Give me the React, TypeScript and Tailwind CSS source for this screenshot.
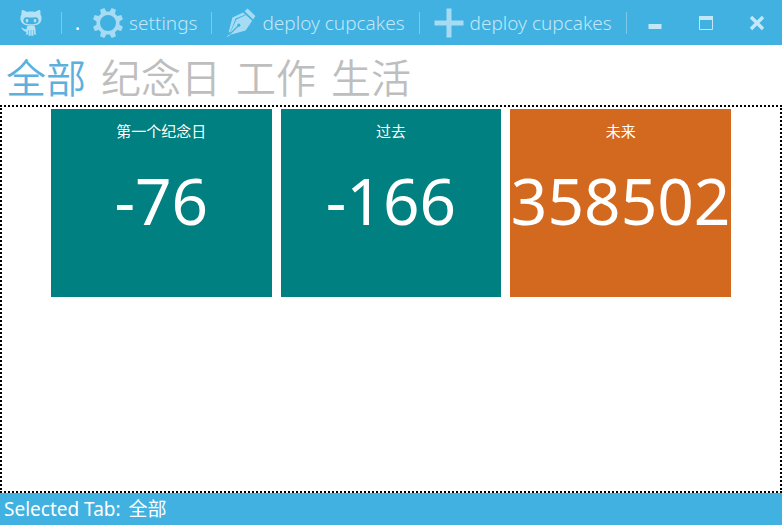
import { useState } from 'react';

const TABS = ['全部', '纪念日', '工作', '生活'];

const TILES = [
  { title: '第一个纪念日', value: '-76', color: 'bg-[#008080]' },
  { title: '过去', value: '-166', color: 'bg-[#008080]' },
  { title: '未来', value: '358502', color: 'bg-[#d2691e]' },
];

const TEETH = [0, 45, 90, 135, 180, 225, 270, 315];

function OctocatIcon() {
  return (
    <svg viewBox="0 0 22 27" className="h-[27px] w-[22px]" fill="currentColor" aria-hidden="true">
      <path
        fillRule="evenodd"
        d="M2 1C3.6 .7 5.6 2 6.8 3C9.4 2.4 12.6 2.4 15.2 3C16.4 2 18.4 .7 20 1C20.7 2.7 20.6 4.2 20.3 5.3C21.4 6.7 21.7 8.2 21.5 10C21.2 14.6 18 16.5 11 16.5C4 16.5 .8 14.6 .5 10C.3 8.2 .6 6.7 1.7 5.3C1.4 4.2 1.3 2.7 2 1ZM6.5 8.3C4.6 8.3 3.4 9.7 3.4 11.5C3.4 14.3 6 15.2 11 15.2C16 15.2 18.6 14.3 18.6 11.5C18.6 9.7 17.4 8.3 15.5 8.3C14 8.3 12.8 8.6 11 8.6C9.2 8.6 8 8.3 6.5 8.3Z"
      />
      <ellipse cx="7" cy="11.6" rx="1.3" ry="1.9" />
      <ellipse cx="15" cy="11.6" rx="1.3" ry="1.9" />
      <path d="M7.4 17C9.5 16 12.5 16 14.6 17C15.6 19 15.6 21 15.6 24L16.4 25.4H14V21H13.4V26.8H11.3V21H10.7V26.8H8.6V21H8V25.4H5.6L6.4 24V22.7C3.6 23 3.2 20.4 .8 18.8C3 18 4 20.6 6.5 20.5C6.6 19 6.8 18 7.4 17Z" />
    </svg>
  );
}

function GearIcon() {
  return (
    <svg viewBox="-15 -15 30 30" className="size-[30px] text-[#a6dcf3]" fill="currentColor" aria-hidden="true">
      <path
        fillRule="evenodd"
        d="M0-11.5A11.5 11.5 0 1 1 0 11.5A11.5 11.5 0 1 1 0-11.5ZM0-8A8 8 0 1 0 0 8A8 8 0 1 0 0-8Z"
      />
      {TEETH.map((angle) => (
        <path key={angle} d="M-3-10.5L-2.3-15.2H2.3L3-10.5Z" transform={`rotate(${angle + 22.5})`} />
      ))}
    </svg>
  );
}

function PenIcon() {
  return (
    <svg viewBox="0 0 30 30" className="size-[30px] text-[#a6dcf3]" aria-hidden="true">
      <path d="M18.6 3.2L21.6 .6L29.4 8L27.2 11.4Z" fill="currentColor" />
      <path d="M17.2 4.6L19.4 6.4L9.6 10.6L4.6 23.4L2.6 24.6L6.4 9.4Z" fill="currentColor" />
      <path d="M20 7L26.2 12.8L19.6 22.4L5.4 26.6L.3 29.4L4.4 24.6L10.4 11.4Z" fill="currentColor" />
      <path d="M3 27L12 18" stroke="#41b1e1" strokeWidth="1.1" />
      <circle cx="12.8" cy="17.2" r="1.6" fill="#41b1e1" />
    </svg>
  );
}

function PlusIcon() {
  return (
    <svg viewBox="0 0 30 30" className="size-[30px] text-[#a6dcf3]" aria-hidden="true">
      <path d="M15 .5V29.5M.5 15H29.5" stroke="currentColor" strokeWidth="5" />
    </svg>
  );
}

function Divider() {
  return <span className="h-[22px] w-px shrink-0 bg-[#7cc9eb]" />;
}

const command = 'flex items-center gap-[6px] whitespace-nowrap';

export default function App() {
  const [selected, setSelected] = useState(TABS[0]);

  return (
    <div className="flex min-h-screen flex-col bg-white font-['Noto_Sans','Noto_Sans_CJK_SC',sans-serif]">
      <header className="flex h-[45px] items-center bg-[#41b1e1] text-[19px] leading-6 font-light text-[#c2e7f7]">
        <button type="button" aria-label="GitHub" className="ml-5 mr-[19px] text-[#b3e1f5]">
          <OctocatIcon />
        </button>
        <Divider />
        <h1 className="mx-[13px] font-normal text-white">.</h1>
        <button type="button" className={`${command} mr-[14px]`}>
          <GearIcon />
          settings
        </button>
        <Divider />
        <button type="button" className={`${command} mx-[14px]`}>
          <PenIcon />
          deploy cupcakes
        </button>
        <Divider />
        <button type="button" className={`${command} mx-[14px]`}>
          <PlusIcon />
          deploy cupcakes
        </button>
        <Divider />
        <div className="ml-auto flex">
          <button type="button" aria-label="Minimize" className="flex h-[45px] w-[51px] items-center justify-center">
            <svg viewBox="0 0 16 16" className="size-4" aria-hidden="true">
              <path d="M1.5 11.5H14.5" stroke="currentColor" strokeWidth="5" />
            </svg>
          </button>
          <button type="button" aria-label="Maximize" className="flex h-[45px] w-[51px] items-center justify-center">
            <svg viewBox="0 0 16 16" className="size-4" aria-hidden="true">
              <path d="M1.5 1.5H14.5V14.5H1.5Z" fill="none" stroke="currentColor" />
              <path d="M1 1H15V5H1Z" fill="currentColor" />
            </svg>
          </button>
          <button type="button" aria-label="Close" className="flex h-[45px] w-[51px] items-center justify-center">
            <svg viewBox="0 0 16 16" className="size-4" aria-hidden="true">
              <path d="M2 2L14 14M14 2L2 14" stroke="currentColor" strokeWidth="3.4" />
            </svg>
          </button>
        </div>
      </header>

      <nav role="tablist" className="flex h-[60px] items-center gap-[15px] px-[6px] pt-[6px]">
        {TABS.map((tab) => (
          <button
            key={tab}
            type="button"
            role="tab"
            aria-selected={tab === selected}
            onClick={() => setSelected(tab)}
            className={`text-[40px] leading-[54px] font-[350] ${tab === selected ? 'text-[#5bb0de]' : 'text-[#bebebe]'}`}
          >
            {tab}
          </button>
        ))}
      </nav>

      <main className="flex-1 border-2 border-dotted border-black pt-[2px]">
        <div className="mx-auto grid max-w-[680px] grid-cols-3 gap-[9px]">
          {TILES.map((tile) => (
            <section key={tile.title} className={`flex h-[188px] flex-col items-center pt-3 text-white ${tile.color}`}>
              <h2 className="text-[15px] leading-5">{tile.title}</h2>
              <p className="mt-[18px] text-[64px] leading-[84px]">{tile.value}</p>
            </section>
          ))}
        </div>
      </main>

      <footer className="flex h-8 items-center gap-2 bg-[#41b1e1] px-1 text-[19px] leading-6 text-white">
        <span>Selected Tab:</span>
        <span>{selected}</span>
      </footer>
    </div>
  );
}
